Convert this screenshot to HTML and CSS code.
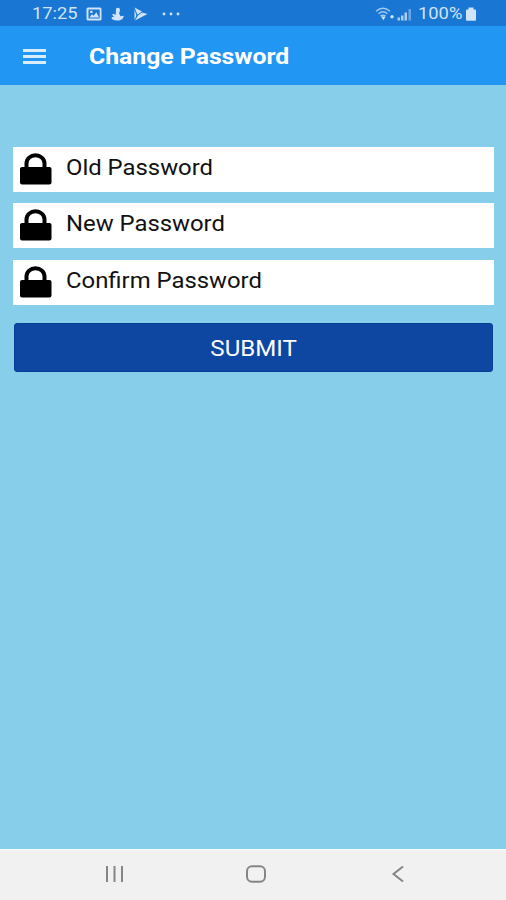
FILE: index.html
```html
<!DOCTYPE html>
<html lang="en">
<head>
<meta charset="utf-8">
<title>Change Password</title>
<link rel="stylesheet" href="styles.css">
</head>
<body>
<div class="screen">
  <div class="status">
    <span class="wide clock">17:25</span>
    <svg class="notifications" width="96" height="16" viewBox="86 5 96 16" fill="currentColor">
      <path fill-rule="evenodd" d="M88 6.500h12q1.500 0 1.500 1.500v10q0 1.500-1.500 1.500H88q-1.500 0-1.500-1.500V8q0-1.500 1.500-1.500zM88.500 8.500v9h11.200v-9zM89.500 16.600l2.400-3.300 1.800 1.500 2.600-3.600 2.800 5.400zM90.200 9.800h2.300v2.300h-2.300z"/>
      <path d="M116 7.500q3-1.500 3.800.5t-.8 4.200l1.600 3 3.400-.5q-.8 3.500-3.800 4.500-4.600 1-8-1-1.400-1.700-.2-2.300l2.200.4-2-2.600q.7-1.600 2.300-.5l1.200.8z"/>
      <path d="M134.500 6.500l7.500 4-4.500 3.200zM142 11.500l5.500 1.500-12.500 6.500 3-5zM134.500 8.500l1.900 6-1.900 4.500z"/>
      <circle cx="164" cy="13" r="1.400"/><circle cx="171" cy="13" r="1.400"/><circle cx="178" cy="13" r="1.400"/>
    </svg>
    <svg class="signals" width="38" height="16" viewBox="375 5 38 16">
      <g fill="none" stroke="currentColor" stroke-width="1.500" opacity=".75">
        <path d="M376 10.200q7-6 14 0M378.500 12.800q4.500-4 9 0M380.500 15.200q2.500-2 5 0"/>
      </g>
      <g fill="currentColor">
        <path d="M381 15.500h4.500l-2 3.800z"/><circle cx="392" cy="15.800" r="1.700"/>
        <path opacity=".8" d="M397.500 16.500h2.500v3h-2.500zM401 14.500h2.500v5H401zM404.500 11.500h2.500v8h-2.500z"/>
        <path opacity=".45" d="M408.500 8h2.500v11.500h-2.500z"/>
      </g>
    </svg>
    <span class="wide percent">100%</span>
    <svg width="12" height="16" viewBox="465 5 12 16" fill="currentColor"><path d="M468.500 6.500h5v2h1.500q1 0 1 1v9q0 1.200-1 1.200h-8q-1 0-1-1.200v-9q0-1 1-1h1.500z"/></svg>
  </div>
  <header class="bar">
    <div class="menu"><i></i><i></i><i></i></div>
    <h1 class="wide">Change Password</h1>
  </header>
  <main class="form">
    <div class="field"><svg class="lock" viewBox="0 0 34 34"><path d="M8 16v-4.500a9 8.300 0 0 1 18 0V16" transform="translate(-.5 0)"/><rect x="1" y="15" width="31.500" height="17.500" rx="2"/></svg><span class="wide">Old Password</span></div>
    <div class="field"><svg class="lock" viewBox="0 0 34 34"><path d="M8 16v-4.500a9 8.300 0 0 1 18 0V16" transform="translate(-.5 0)"/><rect x="1" y="15" width="31.500" height="17.500" rx="2"/></svg><span class="wide">New Password</span></div>
    <div class="field"><svg class="lock" viewBox="0 0 34 34"><path d="M8 16v-4.500a9 8.300 0 0 1 18 0V16" transform="translate(-.5 0)"/><rect x="1" y="15" width="31.500" height="17.500" rx="2"/></svg><span class="wide">Confirm Password</span></div>
    <button class="submit"><span class="wide">SUBMIT</span></button>
  </main>
  <nav class="nav">
    <svg width="20" height="18" viewBox="0 0 20 18"><path d="M2 1v16M9.500 1v16M17 1v16"/></svg>
    <svg width="22" height="18" viewBox="0 0 22 18"><rect x="2" y="1.200" width="18" height="15.600" rx="5"/></svg>
    <svg width="14" height="18" viewBox="0 0 14 18"><path d="M12 1.500L2.500 9l9.500 7.500"/></svg>
  </nav>
</div>
</body>
</html>
```

FILE: styles.css
```css
* { box-sizing: border-box; }
body { margin: 0; font-family: Roboto, "Liberation Sans", sans-serif; }
.screen { width: 506px; height: 900px; display: flex; flex-direction: column; background: #87ceeb; }
.wide { display: inline-block; white-space: nowrap; transform: scaleX(1.11); transform-origin: 0 50%; }
.status { height: 26px; flex: none; display: flex; align-items: center; background: #1976d2; color: #d0e3f8; font-size: 16.500px; padding: 1px 29px 0 32px; }
.clock { width: 54px; }
.notifications { margin-right: 193px; }
.signals { margin-right: 5px; }
.percent { width: 47px; }
.bar { height: 59px; flex: none; display: flex; align-items: center; padding: 1px 0 0 23px; background: #2196f3; color: #fff; }
.menu { width: 23px; display: flex; flex-direction: column; gap: 3px; margin: 0 42.500px 0 0; }
.menu i { height: 3px; background: #d9ecfd; }
.bar h1 { margin: 1px 0 0; font-size: 22px; font-weight: 700; transform: scaleX(1.125); }
.form { flex: 1; display: flex; flex-direction: column; padding: 62px 12px 0 12.500px; }
.field { height: 45px; margin-bottom: 11.400px; display: flex; padding: 5px 0 0 6.500px; background: #fff; color: #111; font-size: 21.500px; line-height: 31px; }
.lock { width: 34px; height: 34px; margin-right: 13px; fill: #000; flex: none; }
.lock path { fill: none; stroke: #000; stroke-width: 4; }
.submit { height: 49px; margin: 6.500px 1px 0; border: 1px solid #073c98; border-radius: 3px; background: #0d47a1; color: #fff; font: 21.500px Roboto, sans-serif; padding: 2px 0 0; }
.submit .wide { transform: scaleX(1.12); transform-origin: 50% 50%; }
.nav { height: 51px; flex: none; display: flex; align-items: center; padding: 0 0 2px 105px; background: #f1f1f1; border-top: 1px solid #f8fcfe; }
.nav svg { fill: none; stroke: #858585; stroke-width: 2; }
.nav svg:nth-child(2) { margin: 0 124px 0 120px; }
```
